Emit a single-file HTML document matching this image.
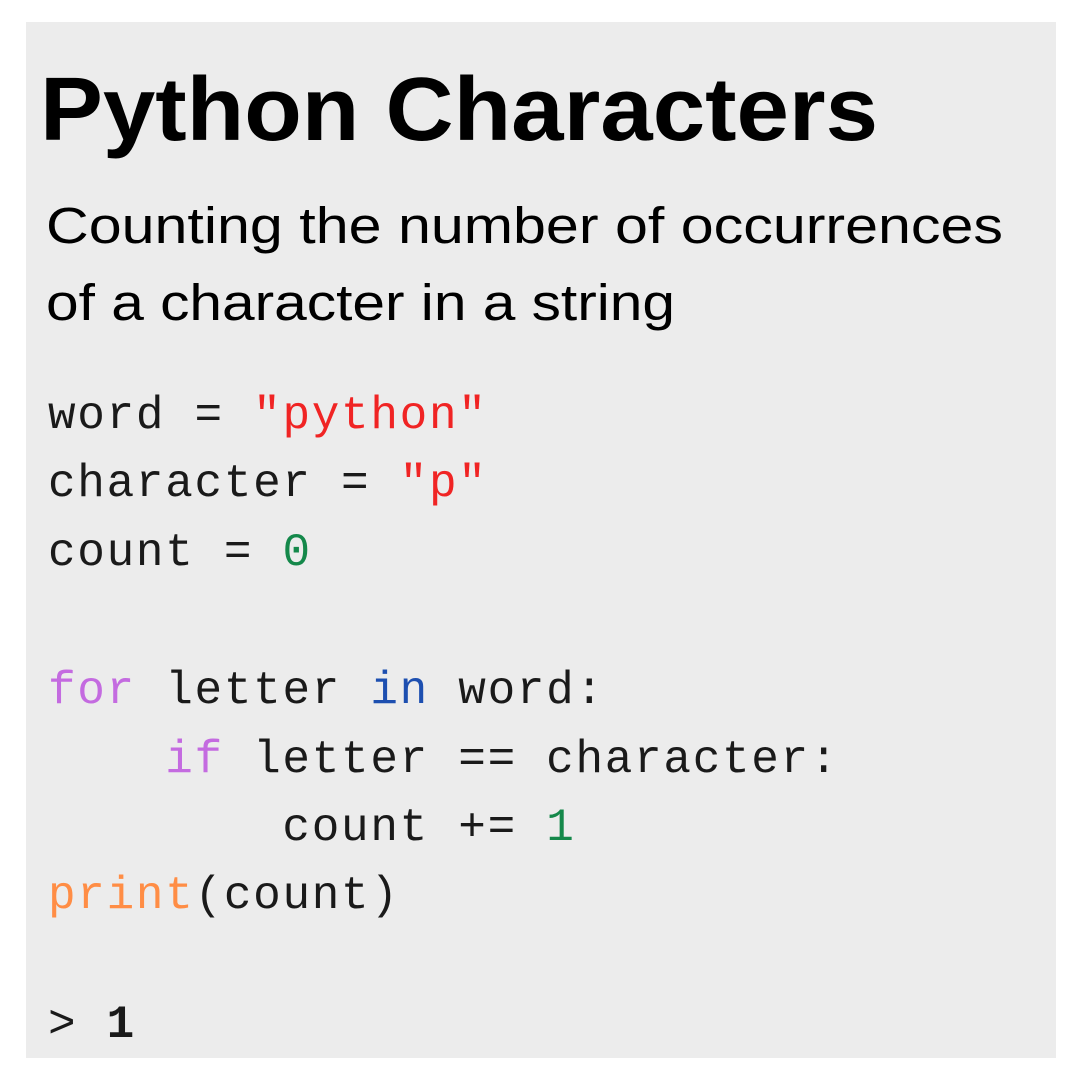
<!DOCTYPE html>
<html><head><meta charset="utf-8"><style>
html,body{margin:0;padding:0;background:#fff;width:1080px;height:1080px;overflow:hidden}
.card{position:absolute;left:26px;top:22px;width:1030px;height:1036px;background:#ececec}
svg{position:absolute;left:0;top:0}
.code{position:absolute;left:48px;font-family:"Liberation Mono",monospace;font-size:46px;letter-spacing:1.7px;color:#1a1a1a;white-space:pre;line-height:1}
.s{color:#f02424}.n{color:#14884a}.k{color:#c46be0}.b{color:#1d4fb0}.p{color:#ff8d45}
</style></head><body>
<div class="card"></div>
<svg width="1080" height="1080">
<text x="40" y="140" font-family="Liberation Sans,sans-serif" font-weight="bold" font-size="90" textLength="838" lengthAdjust="spacingAndGlyphs" fill="#000">Python Characters</text>
<text x="46" y="243" font-family="Liberation Sans,sans-serif" font-size="51" textLength="957" lengthAdjust="spacingAndGlyphs" fill="#000">Counting the number of occurrences</text>
<text x="46" y="320" font-family="Liberation Sans,sans-serif" font-size="51" textLength="629" lengthAdjust="spacingAndGlyphs" fill="#000">of a character in a string</text>
</svg>
<div class="code" style="top:393px">word = <span class="s">"python"</span></div>
<div class="code" style="top:461px">character = <span class="s">"p"</span></div>
<div class="code" style="top:530px">count = <span class="n">0</span></div>
<div class="code" style="top:668px"><span class="k">for</span> letter <span class="b">in</span> word:</div>
<div class="code" style="top:737px">    <span class="k">if</span> letter == character:</div>
<div class="code" style="top:805px">        count += <span class="n">1</span></div>
<div class="code" style="top:873px"><span class="p">print</span>(count)</div>
<div class="code" style="top:1002px">&gt; <b>1</b></div>
</body></html>
